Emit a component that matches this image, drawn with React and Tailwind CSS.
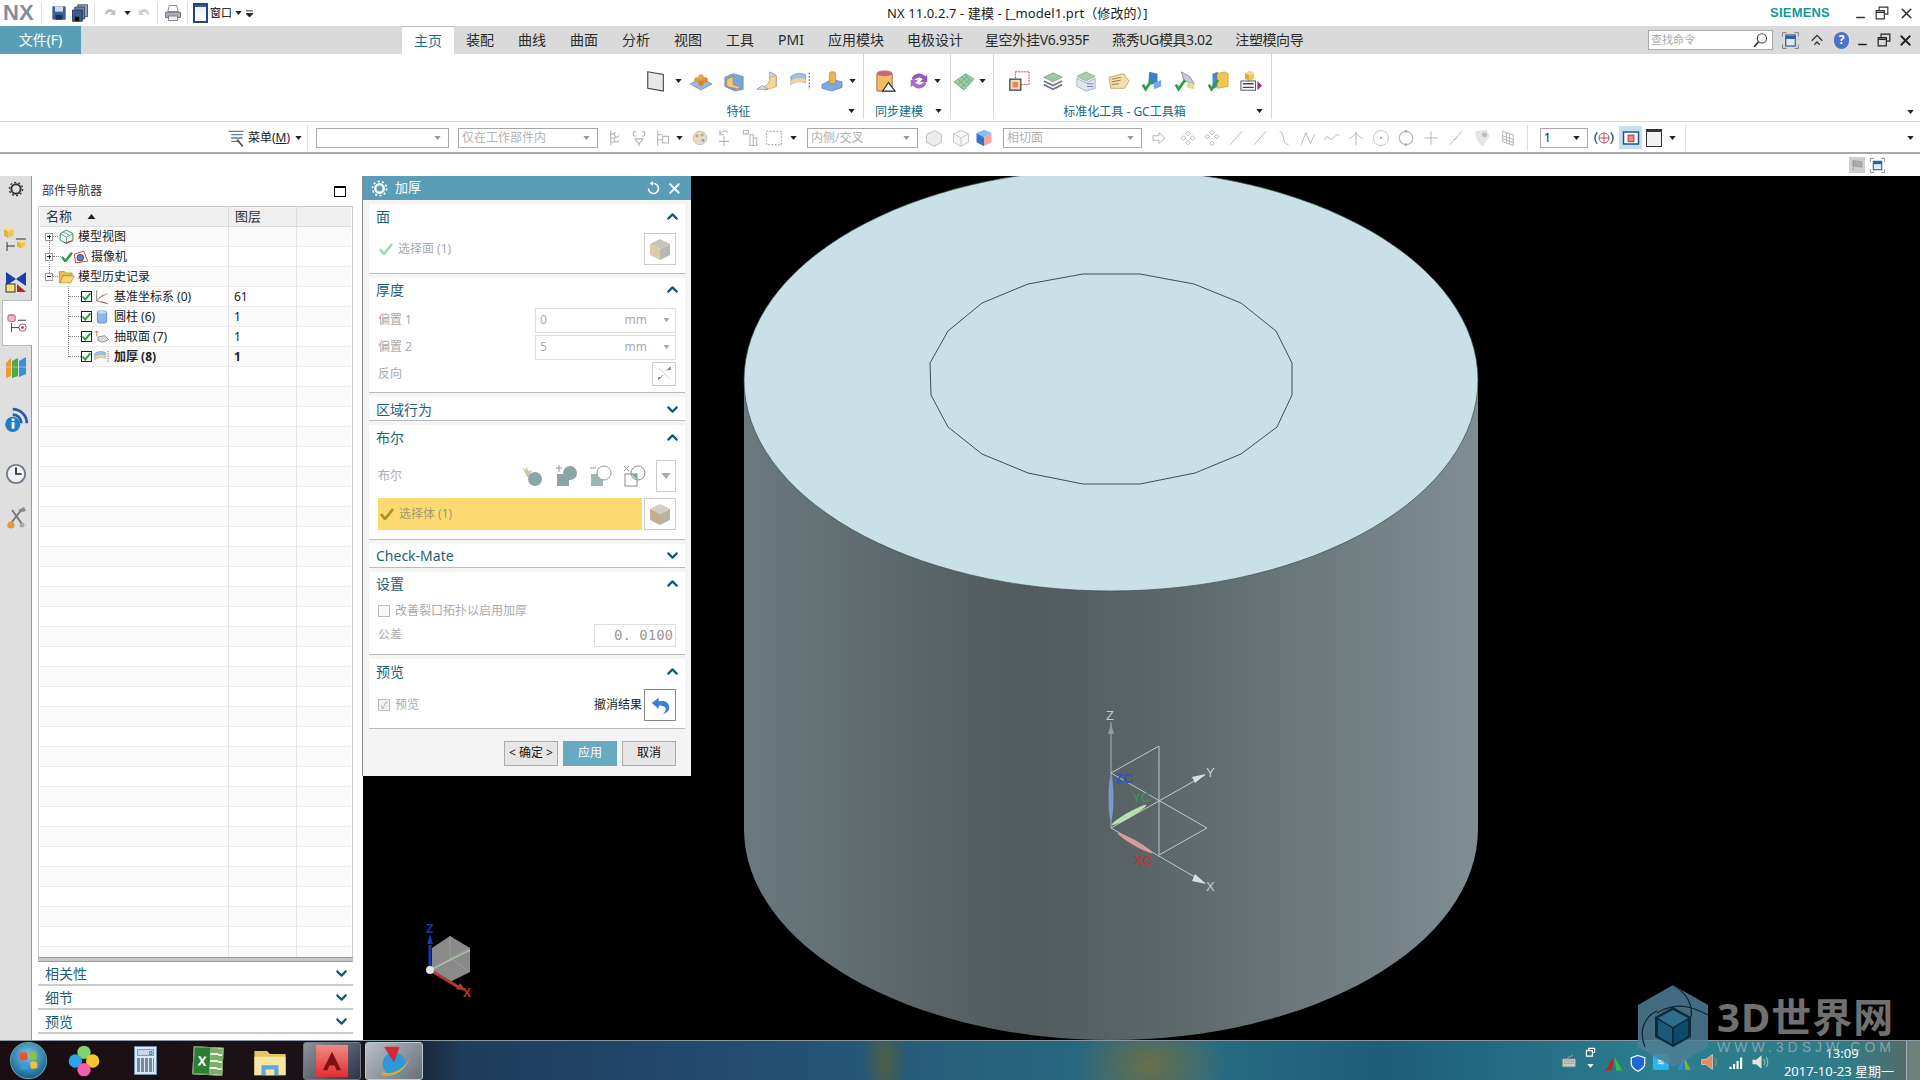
import { X, Minus, ChevronUp, ChevronDown } from 'lucide-react';

const tabs = [
  ['装配', 'px-[12px]'],
  ['曲线', 'px-[12px]'],
  ['曲面', 'px-[12px]'],
  ['分析', 'px-[12px]'],
  ['视图', 'px-[12px]'],
  ['工具', 'px-[12px]'],
  ['PMI', 'px-[12px]'],
  ['应用模块', 'px-[12px]'],
  ['电极设计', 'px-[11px]'],
  ['星空外挂V6.935F', 'px-[11px] tracking-[-0.3px]'],
  ['燕秀UG模具3.02', 'px-[12px] tracking-[-0.4px]'],
  ['注塑模向导', 'px-[11px] tracking-[-0.4px]'],
];

const S = ({ s = 22, children, className = '' }) => (
  <svg viewBox="0 0 24 24" width={s} height={s} className={`shrink-0 ${className}`}>
    {children}
  </svg>
);

const Caret = ({ color = '#222', className = '' }) => (
  <svg viewBox="0 0 8 5" width="7" height="4" className={`shrink-0 ${className}`}>
    <path d="M0 0h8L4 5z" fill={color} />
  </svg>
);

const Slot = ({ w, children }) => <div className={`flex items-center justify-center shrink-0 ${w}`}>{children}</div>;

const Chev = ({ up }) =>
  up ? <ChevronUp size={17} strokeWidth={3} className="text-[#15566c]" /> : <ChevronDown size={17} strokeWidth={3} className="text-[#15566c]" />;

// ribbon icons
const Box = ({ top = '#f2b04e', left = '#c97a1e', right = '#e89a36' }) => (
  <>
    <path d="M12 3l8 4-8 4-8-4z" fill={top} />
    <path d="M4 7l8 4v10l-8-4z" fill={left} />
    <path d="M20 7l-8 4v10l8-4z" fill={right} />
  </>
);
const icons = {
  plane: <path d="M3 2l17 3v18L3 20z" fill="#e4ebe4" stroke="#444" strokeWidth="1.2" />,
  block: (
    <>
      <path d="M1 15l11-6 11 6-11 6z" fill="#9db7e0" stroke="#5b76ad" strokeWidth=".6" />
      <circle cx="8" cy="11" r="2.8" fill="#e59a3c" /><circle cx="12" cy="8" r="2.8" fill="#e8a648" /><circle cx="16" cy="11" r="2.8" fill="#dc8e30" /><circle cx="12" cy="14" r="2.8" fill="#d98628" />
    </>
  ),
  extrude: (
    <>
      <path d="M2 8l9-4 11 3v14l-9 2-11-5z" fill="#7ea3d8" stroke="#4f6ea5" strokeWidth=".6" />
      <path d="M4 10l7-3v9l7 2v3l-14-3z" fill="#f0c77c" stroke="#a8752d" strokeWidth=".6" />
    </>
  ),
  sweep: (
    <>
      <path d="M15 2l7 4v12l-7-3z" fill="#cfd8ec" stroke="#667" strokeWidth=".6" />
      <path d="M15 8c0 7-4 10-9 11l4 3c5-2 9-2 12-4V6z" fill="#f6d49a" stroke="#b08a45" strokeWidth=".6" />
      <path d="M1 21l6-4 6 4z" fill="#dde3f2" stroke="#667" strokeWidth=".6" />
    </>
  ),
  thicken: (
    <>
      <path d="M1 7c5-4 10-4 16-2v9c-6-2-11-2-16 2z" fill="#9cc0ea" stroke="#4d74a8" strokeWidth=".6" />
      <path d="M1 12c5-4 10-4 16-2v4c-6-2-11-2-16 2z" fill="#f3d488" />
      <path d="M21 3v18" stroke="#c33" strokeWidth="1.2" strokeDasharray="2 1.5" />
    </>
  ),
  boss: (
    <>
      <path d="M1 16l11-6 11 3v6l-11 4-11-3z" fill="#7ea7e0" stroke="#3f68a8" strokeWidth=".6" />
      <rect x="9" y="2" width="7" height="13" rx="2" fill="#eeb25a" stroke="#b07a28" strokeWidth=".6" />
    </>
  ),
  cyl: (
    <>
      <path d="M3 4c0-4 16-4 16 0v18H3z" fill="#f0c060" stroke="#a04040" strokeWidth=".8" />
      <ellipse cx="11" cy="4" rx="8" ry="2.6" fill="#d0657a" />
      <path d="M15 13l7 9H9z" fill="#fff" stroke="#333" strokeWidth="1.3" />
    </>
  ),
  sync: (
    <>
      <path d="M4 10c1-6 10-9 15-3l2-2v8h-8l3-3c-3-3-7-2-9 1z" fill="#9a56b8" />
      <path d="M20 14c-1 6-10 9-15 3l-2 2v-8h8l-3 3c3 3 7 2 9-1z" fill="#a96cc6" />
    </>
  ),
  mesh: (
    <>
      <path d="M1 13l13-9 9 6-11 12z" fill="#9bcba8" stroke="#5f9470" strokeWidth=".7" />
      <path d="M5 10l9 8M9 7l9 8M13 5l6 7M5 16l11-9M9 19l10-9" stroke="#5f9470" strokeWidth=".6" fill="none" />
    </>
  ),
  frame: (
    <>
      <rect x="8" y="2" width="15" height="14" fill="#fff" stroke="#c33" strokeWidth="1" strokeDasharray="2 1" />
      <rect x="2" y="10" width="12" height="12" fill="#f5d8c8" stroke="#444" strokeWidth="1.4" />
      <rect x="5" y="13" width="6" height="6" fill="#e8884a" />
    </>
  ),
  layers: (
    <>
      <path d="M12 3l10 5-10 5L2 8z" fill="#9fc9a4" stroke="#777" strokeWidth=".6" />
      <path d="M2 12l10 5 10-5M2 16l10 5 10-5" stroke="#778" strokeWidth="2" fill="none" />
    </>
  ),
  table: (
    <>
      <path d="M12 2l10 5-10 5L2 7z" fill="#a9cdaa" stroke="#888" strokeWidth=".6" />
      <path d="M2 9l10 5 10-5v11l-10 3-10-5z" fill="#dfe5ee" stroke="#8a93a8" strokeWidth=".7" />
      <path d="M13 15h7M13 18h7" stroke="#7a88a8" strokeWidth="1.2" />
    </>
  ),
  tag: (
    <>
      <path d="M1 8l16-4 6 8-5 8-15 0z" fill="#f2e0a8" stroke="#a08a50" strokeWidth=".7" />
      <path d="M4 10l10-2M4 13l10-2M4 16l8-1" stroke="#6a5a30" strokeWidth=".8" />
    </>
  ),
  chk1: (
    <>
      <path d="M9 2l9 2v10l-7 2-3-2z" fill="#3a7fd0" />
      <path d="M14 14l8-3v7l-8 3z" fill="#77a8e8" />
      <path d="M2 16l3 5 7-10" stroke="#2aa040" strokeWidth="3" fill="none" />
    </>
  ),
  chk2: (
    <>
      <path d="M8 2l9 5 5 8-11-3z" fill="#c6ccda" stroke="#557" strokeWidth=".6" />
      <path d="M15 13l7 2v6l-8-2z" fill="#e3d79a" />
      <path d="M2 16l3 5 7-10" stroke="#2aa040" strokeWidth="3" fill="none" />
    </>
  ),
  chk3: (
    <>
      <path d="M6 4l6-2v16l-6 3z" fill="#4a87d8" />
      <path d="M11 4l8-2 4 2v14l-12 2z" fill="#f4c650" stroke="#b08a20" strokeWidth=".6" />
      <path d="M2 16l3 5 7-10" stroke="#2aa040" strokeWidth="3" fill="none" />
    </>
  ),
  abc: (
    <>
      <g transform="translate(3 -1) scale(.62)"><Box top="#f7d77e" left="#d9a93c" right="#eec35c" /></g>
      <rect x="1" y="12" width="16" height="10" fill="#fff" stroke="#446" strokeWidth="1" />
      <path d="M3 15h12M3 19h12" stroke="#446" strokeWidth="1.4" />
      <path d="M19 12l5 5-5 5z" fill="#a0308a" />
    </>
  ),
};
const I = ({ n, s = 22 }) => <S s={s}>{icons[n]}</S>;

// gray disabled toolbar icons
const G = ({ d, fill = 'none', s = 20 }) => (
  <S s={s}>
    <path d={d} fill={fill} stroke="#b4b4b4" strokeWidth="1.3" />
  </S>
);
const grayA = [
  ['w-[26px]', 'M8 3v18M8 7h5M8 12h5M8 17h5M14 5a3 3 0 1 0 4 4M14 11a3 3 0 1 0 4 4'],
  ['w-[24px]', 'M8 4a3 3 0 1 0 0 6M16 4a3 3 0 1 1 0 6M7 13h10l-5 6zM12 19v3'],
  ['w-[20px]', 'M8 3v18M8 8h6M8 14h6M14 10h7v8h-7z'],
];

const Combo = ({ w, text, ml, dark }) => (
  <div className={`flex items-center justify-between h-[20px] border border-[#a8a8a8] bg-white pl-[3px] pr-[7px] shrink-0 ${w} ${ml}`}>
    <span className={`text-[12px] leading-none ${dark ? 'text-[#222]' : 'text-[#b0b0b0]'}`}>{text}</span>
    <Caret color={dark ? '#222' : '#999'} />
  </div>
);

const TitleBar = () => (
  <div className="h-[26px] flex items-center bg-white shrink-0">
    <span className="w-[36px] pl-[3px] text-[22px] font-bold leading-none text-[#7f8e9e] font-['Liberation_Sans',sans-serif]">NX</span>
    <div className="w-px h-[22px] bg-[#ddd] ml-[5px]" />
    <S s={16} className="ml-[9px]">
      <path d="M2 2h20v20H2z" fill="#3a5e96" /><path d="M6 2h12v8H6z" fill="#cfd8e8" /><path d="M7 15h10v7H7z" fill="#1d2f50" />
    </S>
    <S s={18} className="ml-[4px]">
      <path d="M9 1h13v16H9z" fill="#8ea4c4" stroke="#334" /><path d="M5 4h13v16H5z" fill="#6a86b0" stroke="#334" /><path d="M2 8h13v15H2z" fill="#3a5e96" stroke="#223" /><path d="M5 17h6v6H5z" fill="#111" />
    </S>
    <div className="w-px h-[22px] bg-[#ddd] ml-[5px]" />
    <S s={16} className="ml-[7px]"><path d="M4 13c2-8 10-9 14-4l2-3v9h-8l3-3c-3-3-6-2-8 3z" fill="#b9c3d0" /></S>
    <Caret className="ml-[6px]" />
    <S s={16} className="ml-[5px]"><path d="M20 13c-2-8-10-9-14-4L4 6v9h8L9 12c3-3 6-2 8 3z" fill="#c9d2dc" /></S>
    <div className="w-px h-[22px] bg-[#ddd] ml-[5px]" />
    <S s={18} className="ml-[6px]">
      <path d="M7 2h10l2 8H5z" fill="#fff" stroke="#667" /><path d="M2 11h20v7H2z" fill="#a8b0bc" stroke="#556" /><path d="M6 16h12v6H6z" fill="#eee" stroke="#667" />
    </S>
    <div className="w-px h-[22px] bg-[#ddd] ml-[5px]" />
    <div className="w-[15px] h-[20px] ml-[5px] border-2 border-[#22457e] bg-[linear-gradient(180deg,#2c5ea0_0,#2c5ea0_15%,#eef3fa_15%,#fff_100%)]" />
    <span className="ml-[2px] text-[11px] text-black">窗口</span>
    <Caret className="ml-[3px]" />
    <svg viewBox="0 0 8 8" width="7" height="7" className="ml-[4px]"><path d="M0 1h8M0 4h8L4 8z" stroke="#222" fill="#222" /></svg>
    <span className="absolute left-[887px] top-[5px] text-[13px] leading-[17px] tracking-[0.1px] text-[#1c1c1c] whitespace-pre">NX 11.0.2.7 - 建模 - [_model1.prt（修改的）]</span>
    <span className="ml-auto text-[13px] font-bold tracking-[0.2px] text-[#0f9a9c] font-['Liberation_Sans',sans-serif]">SIEMENS</span>
    <Minus size={13} strokeWidth={2.5} className="ml-[24px] mt-[8px] text-[#333]" />
    <S s={14} className="ml-[8px]"><path d="M7 8V2h15v12h-6M2 8h14v14H2zM2 11h14" fill="none" stroke="#333" strokeWidth="2" /></S>
    <X size={17} strokeWidth={2.3} className="ml-[9px] mr-[5px] text-[#333]" />
  </div>
);

const MenuBar = () => (
  <div className="h-[28px] flex items-stretch bg-[#dadada] shrink-0">
    <div className="w-[81px] bg-[#5a9eb6] text-white text-[14px] flex items-center justify-center pb-[2px]">文件(F)</div>
    <div className="w-[321px]" />
    <div className="w-[52px] bg-white text-[#14708a] text-[14px] flex items-center justify-center border-t border-[#bbb] pb-[1px]">主页</div>
    {tabs.map(([t, p]) => (
      <div key={t} className={`text-[14px] text-[#2a2a2a] flex items-center whitespace-nowrap pb-[1px] ${p}`}>{t}</div>
    ))}
    <div className="ml-auto flex items-center">
      <div className="w-[125px] h-[20px] bg-white border border-[#aaa] flex items-center justify-between pl-[2px] pr-[3px]">
        <span className="text-[11px] text-[#aaa]">查找命令</span>
        <S s={17}><circle cx="14" cy="9" r="6.5" fill="#f4f6f8" stroke="#444" strokeWidth="1.6" /><path d="M9 14l-6 7" stroke="#444" strokeWidth="2.6" /></S>
      </div>
      <S s={19} className="ml-[8px]"><path d="M2 7V2h5M17 2h5v5M22 17v5h-5M7 22H2v-5" fill="none" stroke="#667" /><rect x="6" y="5" width="12" height="14" fill="#dfe8f4" stroke="#2c4f85" strokeWidth="1.4" /><path d="M6 6h12v4H6z" fill="#2c5ea0" /></S>
      <S s={16} className="ml-[9px]"><path d="M4 13l8-8 8 8M8 19l4-4 4 4" fill="none" stroke="#333" strokeWidth="2" /></S>
      <div className="ml-[9px] w-[15px] h-[17px] rounded-full bg-[#4a74c8] text-white text-[12px] font-bold flex items-center justify-center">?</div>
      <Minus size={13} strokeWidth={2.5} className="ml-[7px] mt-[8px] text-[#222]" />
      <S s={14} className="ml-[8px]"><path d="M7 8V2h15v12h-6M2 8h14v14H2zM2 11h14" fill="none" stroke="#222" strokeWidth="2" /></S>
      <X size={17} strokeWidth={2.6} className="ml-[6px] mr-[6px] text-[#222]" />
    </div>
  </div>
);

const Group = ({ w, label, caret, pr = '', children }) => (
  <div className={`flex flex-col shrink-0 border-r border-[#d8d8d8] mb-[2px] ${w}`}>
    <div className="h-[49px] flex items-center pt-[5px]">{children}</div>
    <div className={`flex-1 relative flex items-center justify-center pt-[2px] ${pr}`}>
      <span className="text-[12px] leading-none text-[#166a80]">{label}</span>
      {caret && <Caret className="absolute right-[8px] top-[6px]" />}
    </div>
  </div>
);

const Ribbon = () => (
  <div className="h-[68px] flex bg-white border-b border-[#d8d8d8] shrink-0">
    <div className="w-[640px] shrink-0" />
    <Group w="w-[224px]" label="特征" caret pr="pr-[26px]">
      <Slot w="w-[32px]"><I n="plane" /></Slot>
      <Slot w="w-[12px]"><Caret /></Slot>
      <Slot w="w-[34px]"><I n="block" s={24} /></Slot>
      <Slot w="w-[32px]"><I n="extrude" /></Slot>
      <Slot w="w-[34px]"><I n="sweep" /></Slot>
      <Slot w="w-[34px]"><I n="thicken" /></Slot>
      <Slot w="w-[28px]"><I n="boss" /></Slot>
      <Slot w="w-[12px]"><Caret /></Slot>
    </Group>
    <Group w="w-[87px]" label="同步建模" caret pr="pr-[16px]">
      <Slot w="w-[42px]"><I n="cyl" s={23} /></Slot>
      <Slot w="w-[26px]"><I n="sync" /></Slot>
      <Slot w="w-[10px]"><Caret /></Slot>
    </Group>
    <Group w="w-[43px]" label="">
      <Slot w="w-[26px]"><I n="mesh" /></Slot>
      <Slot w="w-[10px]"><Caret /></Slot>
    </Group>
    <Group w="w-[278px]" label="标准化工具 - GC工具箱" caret pr="pr-[16px]">
      <Slot w="w-[38px]" />
      <div className="-ml-[30px] flex">
        {[['frame', 'w-[34px]'], ['layers', 'w-[33px]'], ['table', 'w-[33px]'], ['tag', 'w-[33px]'], ['chk1', 'w-[33px]'], ['chk2', 'w-[33px]'], ['chk3', 'w-[33px]'], ['abc', 'w-[33px]']].map(([n, w]) => (
          <Slot key={n} w={w}><I n={n} /></Slot>
        ))}
      </div>
    </Group>
    <div className="flex-1 flex items-end justify-end pr-[6px] pb-[7px]"><Caret /></div>
  </div>
);

const Toolbar = () => (
  <div className="h-[32px] flex items-center bg-white border-b-2 border-[#a8a8a8] shrink-0 relative pt-[1px]">
    <S s={20} className="ml-[227px]"><path d="M2 4h18M5 8h14M5 12h14M5 16h10" stroke="#5f7ca8" strokeWidth="1.6" /><path d="M12 14l7 8" stroke="#555" strokeWidth="2" /></S>
    <span className="ml-[1px] text-[12px] text-[#222]">菜单(<u>M</u>)</span>
    <Caret className="ml-[5px]" />
    <div className="w-px h-[26px] bg-[#ddd] ml-[5px]" />
    <Combo w="w-[133px]" ml="ml-[8px]" text="" />
    <Combo w="w-[140px]" ml="ml-[9px]" text="仅在工作部件内" />
    <div className="ml-[3px] flex items-center">
      {grayA.map(([w, d]) => <Slot key={d} w={w}><G d={d} /></Slot>)}
    </div>
    <Caret className="ml-[5px]" />
    <S s={18} className="ml-[8px]"><circle cx="12" cy="12" r="9" fill="#e6dcc6" stroke="#b4b4b4" /><circle cx="8" cy="9" r="2" fill="#d89a7a" /><circle cx="15" cy="8" r="2" fill="#9ab88a" /><circle cx="16" cy="15" r="2" fill="#8aa0c8" /></S>
    <Slot w="w-[30px]"><G d="M12 10v12M6 16h12M7 8a6 5 0 0 1 10-3M7 3v5h5" /></Slot>
    <Slot w="w-[22px]"><G d="M4 3h6v4H4zM12 8h4v13h-4zM16 12h4v9h-4z" /></Slot>
    <Slot w="w-[26px]"><S s={20}><rect x="3" y="4" width="18" height="16" fill="none" stroke="#aaa" strokeWidth="1.4" strokeDasharray="2 2" /></S></Slot>
    <Caret className="ml-[3px]" />
    <Combo w="w-[111px]" ml="ml-[10px]" text="内侧/交叉" />
    <Slot w="w-[32px]"><S s={20}><path d="M3 8l10-5 8 5v9l-9 5-9-5z" fill="#ececec" stroke="#b4b4b4" /></S></Slot>
    <Slot w="w-[22px]"><S s={20}><path d="M3 7l9-4 9 4v10l-9 5-9-5zM3 7l9 5 9-5M12 12v10" fill="#f7f7f7" stroke="#bbb" /></S></Slot>
    <Slot w="w-[24px]"><S s={20}><path d="M12 2l9 4-9 5-9-5z" fill="#7fc0f0" /><path d="M3 6l9 5v11l-9-5z" fill="#3a70c8" /><path d="M21 6l-9 5v11l9-5z" fill="#f0a8a0" /></S></Slot>
    <Combo w="w-[139px]" ml="ml-[7px]" text="相切面" />
    {[
      'M4 9h8V5l8 7-8 7v-4H4z',
      'M12 3l3 3-3 3-3-3zM12 15l3 3-3 3-3-3zM3 12l3-3 3 3-3 3zM15 12l3-3 3 3-3 3z',
      'M12 2l3 3-3 3-3-3zM12 16l3 3-3 3-3-3zM3 10l3-3 3 3-3 3zM15 10l3-3 3 3-3 3z',
      'M4 21L20 3',
      'M4 21L20 3M10 14l4-4',
      'M6 3c8 2 2 16 12 18',
      'M3 21L9 5l6 14 6-12',
      'M2 14c4-10 8 4 12-2s6-4 8-4',
      'M12 4v18M3 13c4-2 6-4 9-8 3 4 5 6 9 8',
    ].map((d, i) => (
      <Slot key={d} w={i === 0 ? 'w-[34px]' : 'w-[24px]'}><G d={d} s={18} /></Slot>
    ))}
    <Slot w="w-[26px]"><S s={20}><circle cx="12" cy="12" r="9" fill="none" stroke="#bbb" /><circle cx="12" cy="12" r="1.4" fill="#aaa" /></S></Slot>
    <Slot w="w-[24px]"><S s={20}><circle cx="12" cy="12" r="8" fill="none" stroke="#bbb" strokeWidth="1.5" /><circle cx="12" cy="4" r="1.6" fill="#aaa" /><circle cx="12" cy="20" r="1.6" fill="#aaa" /></S></Slot>
    <Slot w="w-[26px]"><G d="M12 3v18M3 12h18" s={18} /></Slot>
    <Slot w="w-[24px]"><G d="M4 21L20 3M10 15l3-3" s={18} /></Slot>
    <Slot w="w-[28px]"><S s={20}><path d="M4 4l14-2 3 8-8 12c-4-2-9-8-9-18z" fill="#e4e4e4" /><circle cx="15" cy="8" r="3" fill="#bbb" /></S></Slot>
    <Slot w="w-[24px]"><G d="M5 3l14 5v14L5 17zM10 5v14M14 6v14M5 9l14 5M5 13l14 5" s={18} /></Slot>
    <div className="w-px h-[26px] bg-[#ddd] ml-[7px]" />
    <Combo w="w-[48px]" ml="ml-[12px]" text="1" dark />
    <S s={20} className="ml-[6px]"><circle cx="12" cy="12" r="6" fill="#fff" stroke="#a33" /><path d="M12 6v12M6 12h12" stroke="#a33" /><path d="M4 5A10 10 0 0 0 4 19M20 5a10 10 0 0 1 0 14" fill="none" stroke="#3a5ea8" strokeWidth="1.8" /></S>
    <div className="ml-[5px] w-[23px] h-[23px] bg-[#c3e1ee] flex items-center justify-center">
      <S s={18}><rect x="2" y="4" width="20" height="16" fill="#fff" stroke="#2c4f85" strokeWidth="2" /><path d="M8 8h8v9H8z" fill="#e88" stroke="#822" /></S>
    </div>
    <div className="ml-[4px] w-[16px] h-[18px] bg-[#f1f1f1] border border-[#333] border-t-[3px]" />
    <Caret className="ml-[7px]" />
    <div className="w-px h-[26px] bg-[#ddd] ml-[9px]" />
    <Caret className="ml-auto mr-[6px]" />
  </div>
);

const SubBar = () => (
  <div className="h-[22px] flex items-center justify-end bg-white shrink-0 pr-[34px] gap-[4px]">
    <div className="w-[16px] h-[16px] bg-[#cfcfcf] flex items-center justify-center">
      <S s={13}><path d="M4 3l16 2v10L4 13zM4 3v19" fill="#aaa" stroke="#888" /></S>
    </div>
    <S s={17}><path d="M2 7V2h5M17 2h5v5M22 17v5h-5M7 22H2v-5" fill="none" stroke="#667" /><rect x="6" y="6" width="12" height="12" fill="#dfe8f4" stroke="#2c4f85" strokeWidth="1.4" /><path d="M6 6h12v4H6z" fill="#2c5ea0" /></S>
  </div>
);

const SideTabs = () => (
  <div className="w-[32px] shrink-0 bg-[#dfdfdf] border-r border-[#9a9a9a] flex flex-col items-center">
    <S s={16} className="mt-[5px]"><circle cx="12" cy="12" r="7" fill="none" stroke="#333" strokeWidth="3" /><circle cx="12" cy="12" r="10" fill="none" stroke="#333" strokeWidth="2" strokeDasharray="3 3.3" /></S>
    <S s={24} className="mt-[31px]">
      <g transform="translate(-3 -3) scale(.62)"><Box top="#f7dc80" left="#dfb23c" right="#f0c850" /></g>
      <g transform="translate(11 10) scale(.5)"><Box top="#f7dc80" left="#dfb23c" right="#f0c850" /></g>
      <path d="M3 14v9M3 18h8M12 11h10" stroke="#333" fill="none" />
    </S>
    <S s={24} className="mt-[18px]"><path d="M2 2l10 7 10-7v14l-10-7L2 16z" fill="#1b3ea8" /><rect x="2" y="14" width="9" height="8" fill="#f4e27a" stroke="#333" /><path d="M13 14l9 8h-9z" fill="#c4221e" /></S>
    <div className="mt-[6px] -mr-px ml-[2px] w-[31px] h-[46px] bg-white border-y border-l border-[#b8b8b8] flex items-center justify-center">
      <svg viewBox="0 0 24 24" width="22" height="24"><ellipse cx="5" cy="4" rx="4" ry="1.6" fill="#d65a8a" /><path d="M1 4v5c0 2 8 2 8 0V4" fill="#e9b8cc" stroke="#a04070" strokeWidth=".8" /><path d="M5 12v10M5 17h8M12 9h9" stroke="#333" fill="none" /><circle cx="17" cy="17" r="4" fill="none" stroke="#a04070" /><circle cx="17" cy="17" r="1.5" fill="#a04070" /></svg>
    </div>
    <S s={24} className="mt-[9px]"><path d="M2 8l5-5v18l-5 2z" fill="#ee9a2a" /><path d="M8 6l6-3v18l-6 2z" fill="#4ea84a" /><path d="M15 6l7-4v17l-7 3z" fill="#3a90d8" /><path d="M2 12h20" stroke="#fff" strokeWidth=".8" opacity=".5" /></S>
    <S s={26} className="mt-[28px]"><circle cx="9" cy="16" r="7" fill="#1f7ec8" /><rect x="8" y="14" width="2.6" height="6" fill="#fff" /><rect x="8" y="10.6" width="2.6" height="2.2" fill="#fff" /><path d="M9 7a8 8 0 0 1 8 8M9 2a13 13 0 0 1 13 13" fill="none" stroke="#2a5aa8" strokeWidth="2.4" /></S>
    <S s={22} className="mt-[30px]"><circle cx="12" cy="12" r="10" fill="#f1f3f6" stroke="#6f7a88" strokeWidth="2" /><path d="M12 5v7h6" fill="none" stroke="#222" strokeWidth="1.8" /></S>
    <S s={24} className="mt-[20px]"><path d="M4 22L18 4" stroke="#777" strokeWidth="2" /><path d="M14 5l6-3 2 4-4 1z" fill="#888" /><path d="M8 5l10 14" stroke="#777" strokeWidth="2" /><circle cx="7" cy="20" r="3.5" fill="#e09a3a" /><circle cx="18" cy="20" r="2.5" fill="#aaa" /></S>
  </div>
);

const Check = ({ color = '#22a23c', className = '' }) => (
  <svg viewBox="0 0 14 12" width="14" height="12" className={`shrink-0 ${className}`}>
    <path d="M1 6l4 5 8-10" fill="none" stroke={color} strokeWidth="2.8" />
  </svg>
);
const CheckBox = () => (
  <div className="w-[11px] h-[11px] border border-[#222] bg-white flex items-center justify-center shrink-0">
    <svg viewBox="0 0 14 12" width="11" height="9"><path d="M1 6l4 5 8-10" fill="none" stroke="#22a23c" strokeWidth="3" /></svg>
  </div>
);
const PlusBox = ({ minus }) => (
  <div className="w-[8px] h-[8px] border border-[#999] bg-white relative shrink-0 flex items-center justify-center">
    <div className="w-[4px] h-px bg-[#222]" />
    {!minus && <div className="absolute w-px h-[4px] bg-[#222]" />}
  </div>
);
const Stub = () => <div className="w-[12px] border-t border-dotted border-[#888] shrink-0" />;

const rowsData = [
  { cells: <div className="flex items-center pl-[5px]"><PlusBox /><div className="w-[5px] border-t border-dotted border-[#888]" /><S s={17} className="mr-[3px]"><path d="M12 3l9 5v9l-9 5-9-5V8z" fill="none" stroke="#1c9a6a" strokeWidth="1.4" /><path d="M3 8l9 5 9-5M12 13v9M7 5.5l9 5" stroke="#1c9a6a" fill="none" /><path d="M11 21l10-3" stroke="#d33" strokeWidth="1.6" /></S><span>模型视图</span></div> },
  { cells: <div className="flex items-center pl-[5px]"><PlusBox /><div className="w-[8px] border-t border-dotted border-[#888]" /><svg viewBox="0 0 14 12" width="12" height="10"><path d="M1 6l4 5 8-10" fill="none" stroke="#22a23c" strokeWidth="3" /></svg><S s={16} className="mr-[2px]"><path d="M2 8l14-5 6 15-18 3z" fill="#fff" stroke="#c33" strokeWidth="1.4" /><circle cx="11" cy="13" r="5" fill="#6a7fbf" stroke="#223" /></S><span>摄像机</span></div> },
  { cells: <div className="flex items-center pl-[5px]"><PlusBox minus /><div className="w-[5px] border-t border-dotted border-[#888]" /><S s={17} className="mr-[3px]"><path d="M2 5h7l2 2h9v4H7L3 21H2z" fill="#eebd48" stroke="#9b7a20" strokeWidth=".8" /><path d="M7 11h16l-5 10H3z" fill="#f7d679" stroke="#9b7a20" strokeWidth=".8" /></S><span>模型历史记录</span></div> },
  { layer: '61', cells: <div className="flex items-center pl-[29px]"><Stub /><CheckBox /><S s={16} className="ml-[2px] mr-[4px]"><path d="M4 2v16l16 4M4 18l10-10" stroke="#555" fill="none" /><path d="M8 13l12-6M10 18l10 4" stroke="#c33" /></S><span>基准坐标系 (0)</span></div> },
  { layer: '1', cells: <div className="flex items-center pl-[29px]"><Stub /><CheckBox /><S s={16} className="ml-[2px] mr-[4px]"><rect x="5" y="3" width="14" height="18" rx="3" fill="#8fb6ea" stroke="#4a74b8" /><ellipse cx="12" cy="5" rx="6" ry="2" fill="#c9dcf6" /></S><span>圆柱 (6)</span></div> },
  { layer: '1', cells: <div className="flex items-center pl-[29px]"><Stub /><CheckBox /><S s={16} className="ml-[2px] mr-[4px]"><path d="M6 12l10-2 6 6-10 4-6-3z" fill="#dcdcdc" stroke="#666" /><path d="M4 3v8M1 6l3-3 3 3" stroke="#d5402a" fill="none" /></S><span>抽取面 (7)</span></div> },
  { layer: '1', bold: true, cells: <div className="flex items-center pl-[29px] font-bold"><Stub /><CheckBox /><S s={16} className="ml-[2px] mr-[4px]">{icons.thicken}</S><span>加厚 (8)</span></div> },
];

const Navigator = () => (
  <div className="w-[331px] shrink-0 bg-white flex flex-col">
    <div className="h-[30px] flex items-center justify-between pl-[10px] pr-[17px] shrink-0">
      <span className="text-[12px] text-[#333]">部件导航器</span>
      <div className="w-[12px] h-[11px] border border-black border-t-2" />
    </div>
    <div className="ml-[6px] mr-[10px] flex-1 border-x border-t border-[#ccc] overflow-hidden px-px pt-0 min-h-0 relative">
      <div className="grid grid-cols-[189px_68px_1fr] h-[20px] bg-[#f0f0f0] border-b border-[#ddd] text-[13px] text-[#333]">
        <div className="flex items-center pl-[6px] border-r border-[#ddd]">名称<svg viewBox="0 0 8 5" width="9" height="5" className="ml-[15px]"><path d="M0 5h8L4 0z" fill="#222" /></svg></div>
        <div className="flex items-center pl-[6px] border-r border-[#ddd]">图层</div>
        <div />
      </div>
      <div className="absolute left-[10px] top-[34px] h-[36px] border-l border-dotted border-[#888]" />
      <div className="absolute left-[29px] top-[79px] h-[71px] border-l border-dotted border-[#888]" />
      {Array.from({ length: 37 }, (_, i) => rowsData[i] || {}).map((r, i) => (
        <div key={i} className={`grid grid-cols-[189px_68px_1fr] h-[20px] border-b border-[#ececec] text-[12px] text-[#222] ${i % 2 ? 'bg-white' : 'bg-[#fafafa]'}`}>
          <div className="border-r border-[#e4e4e4] flex items-center">{r.cells}</div>
          <div className={`border-r border-[#e4e4e4] flex items-center pl-[5px] ${r.bold ? 'font-bold' : ''}`}>{r.layer}</div>
          <div />
        </div>
      ))}
    </div>
    <div className="ml-[6px] mr-[10px] h-[5px] bg-[#c8c8c8] border-y border-[#999] shrink-0" />
    {['相关性', '细节', '预览'].map((t) => (
      <div key={t} className="ml-[6px] mr-[10px] h-[24px] border-b-2 border-[#ccc] flex items-center justify-between pl-[7px] pr-[3px] shrink-0 text-[14px] text-[#1f5f75]">
        {t}
        <Chev />
      </div>
    ))}
    <div className="h-[6px] shrink-0" />
  </div>
);

const FaceBtn = ({ dim }) => (
  <div className="w-[32px] h-[32px] bg-white border border-[#ccc] flex items-center justify-center shrink-0">
    <S s={24}>
      <path d="M12 2l10 5-10 5L2 7z" fill={dim ? '#d2cec6' : '#c7c4bb'} />
      <path d="M2 7l10 5v11L2 18z" fill={dim ? '#c4ad8c' : '#dcccac'} />
      <path d="M22 7l-10 5v11l10-5z" fill={dim ? '#b9b3a6' : '#b8b8b4'} />
    </S>
  </div>
);

const Sec = ({ title, h, up = true, children }) => (
  <div className={`bg-white border-b border-[#bbb] mx-[6px] ${h}`}>
    <div className="h-[24px] flex items-center justify-between pl-[7px] pr-[4px] text-[14px] text-[#1f5f75]">
      <span>{title}</span>
      <Chev up={up} />
    </div>
    {children}
  </div>
);

const NumRow = ({ label, val }) => (
  <div className="flex items-center justify-between h-[25px] pl-[9px] pr-[9px] mb-[2px] text-[12px] text-[#aaa]">
    <span>{label}</span>
    <div className="w-[141px] h-[25px] border border-[#ddd] flex items-center justify-between pl-[4px] pr-[5px]">
      <span>{val}</span>
      <span className="flex items-center"><span className="mr-[16px]">mm</span><Caret color="#aaa" /></span>
    </div>
  </div>
);

const Dialog = () => (
  <div className="absolute left-[-1px] top-0 w-[329px] h-[600px] bg-[#f4f4f4] border-l border-[#888] flex flex-col gap-[4px] pb-[10px]">
    <div className="h-[24px] bg-[#5a9db6] flex items-center pl-[8px] pr-[8px] text-white shrink-0">
      <S s={17}><circle cx="12" cy="12" r="6" fill="none" stroke="#fff" strokeWidth="3.4" /><circle cx="12" cy="12" r="10" fill="none" stroke="#fff" strokeWidth="2.4" strokeDasharray="3 3.3" /></S>
      <span className="ml-[7px] text-[13px]">加厚</span>
      <S s={15} className="ml-auto"><path d="M12 4a8 8 0 1 1-8 8" fill="none" stroke="#fff" strokeWidth="2.6" /><path d="M11 0v8l-5-4z" fill="#fff" /></S>
      <X size={17} strokeWidth={2.8} className="ml-[5px]" />
    </div>
    <Sec title="面" h="h-[70px]">
      <div className="flex items-center justify-between pl-[10px] pr-[9px] h-[38px] pt-[4px] text-[12px] text-[#aaa]">
        <span className="flex items-center"><Check className="mr-[5px] opacity-40" />选择面 (1)</span>
        <FaceBtn />
      </div>
    </Sec>
    <Sec title="厚度" h="h-[116px]">
      <div className="pt-[6px]">
        <NumRow label="偏置 1" val="0" />
        <NumRow label="偏置 2" val="5" />
        <div className="flex items-center justify-between pl-[9px] pr-[9px] h-[24px] text-[12px] text-[#aaa]">
          <span>反向</span>
          <div className="w-[24px] h-[24px] border border-[#ccc] flex items-center justify-center">
            <S s={17}><path d="M4 4l16 16" stroke="#bbb" /><path d="M20 3l-6 6" stroke="#999" strokeWidth="1.4" /><path d="M21 2v5h-5z" fill="#888" /><path d="M4 20l6-6" stroke="#999" strokeWidth="1.4" /><path d="M3 22v-5h5z" fill="#888" /></S>
          </div>
        </div>
      </div>
    </Sec>
    <Sec title="区域行为" h="h-[24px]" up={false} />
    <Sec title="布尔" h="h-[115px]">
      <div className="flex items-center pl-[9px] pr-[9px] h-[32px] mt-[11px] text-[12px] text-[#aaa]">
        <span>布尔</span>
        <div className="ml-auto flex items-center gap-[10px] mr-[10px]">
          <S s={24}><path d="M2 3l3 3 2-3 1 4 4-1-2 4 2 2-5 1z" fill="#c4ccb0" /><circle cx="15" cy="15" r="7" fill="#8ea5a8" /></S>
          <S s={24}><path d="M5 1v7M2 4h6" stroke="#999" /><rect x="3" y="10" width="12" height="12" fill="#8ea5a8" /><circle cx="16" cy="9" r="7" fill="#8ea5a8" /></S>
          <S s={24}><path d="M2 4h6" stroke="#999" /><rect x="3" y="10" width="12" height="12" fill="#a0b3b5" /><circle cx="16" cy="9" r="7" fill="#fff" stroke="#999" /></S>
          <S s={24}><path d="M2 2l5 5M7 2L2 7" stroke="#999" /><rect x="3" y="10" width="12" height="12" fill="#fff" stroke="#888" /><circle cx="16" cy="9" r="7" fill="none" stroke="#888" /><path d="M9 10h6v6" fill="#8ea5a8" /></S>
        </div>
        <div className="w-[20px] h-[32px] border border-[#ccc] flex items-center justify-center"><svg viewBox="0 0 8 5" width="10" height="6"><path d="M0 0h8L4 5z" fill="#aaa" /></svg></div>
      </div>
      <div className="flex items-center justify-between pl-[9px] pr-[9px] mt-[6px] gap-[2px] text-[12px]">
        <div className="flex-1 h-[32px] bg-[#fdd971] flex items-center pl-[2px] text-[#a39a70]">
          <Check color="#a5961e" className="mr-[5px]" />选择体 (1)
        </div>
        <FaceBtn dim />
      </div>
    </Sec>
    <Sec title="Check-Mate" h="h-[24px]" up={false} />
    <Sec title="设置" h="h-[84px]">
      <div className="flex items-center pl-[9px] h-[22px] mt-[4px] text-[12px] text-[#aaa]">
        <div className="w-[12px] h-[12px] border border-[#bbb] bg-[#f8f8f8] mr-[5px]" />改善裂口拓扑以启用加厚
      </div>
      <div className="flex items-center justify-between pl-[9px] pr-[9px] mt-[2px] text-[12px] text-[#aaa]">
        <span>公差</span>
        <div className="w-[82px] h-[23px] border border-[#ddd] flex items-center justify-end pr-[2px] overflow-hidden whitespace-pre text-[14px] text-[#999] font-['DejaVu_Sans_Mono',monospace]">0. 0100</div>
      </div>
    </Sec>
    <Sec title="预览" h="h-[70px]">
      <div className="flex items-center pl-[9px] pr-[9px] h-[32px] mt-[6px] text-[12px] text-[#aaa]">
        <div className="w-[12px] h-[12px] border border-[#bbb] bg-[#f4f4f4] mr-[5px] flex items-center justify-center text-[10px] leading-none text-[#999]">✓</div>
        预览
        <span className="ml-auto mr-[2px] text-[#222]">撤消结果</span>
        <div className="w-[32px] h-[32px] bg-white border border-[#888] flex items-center justify-center">
          <S s={21}><path d="M2 9l8-6v4c6-1 12 1 12 7 0 4-3 7-8 8 3-2 4-4 4-6 0-3-4-4-8-4v4z" fill="#3d7fd6" /></S>
        </div>
      </div>
    </Sec>
    <div className="flex justify-end gap-[5px] pr-[15px] mt-[8px] text-[12px]">
      <div className="w-[54px] h-[25px] bg-[#e6e6e6] border border-[#aaa] flex items-center justify-center text-[#111]">&lt; 确定 &gt;</div>
      <div className="w-[54px] h-[25px] bg-[#68aabf] text-white flex items-center justify-center">应用</div>
      <div className="w-[54px] h-[25px] bg-[#e6e6e6] border border-[#aaa] flex items-center justify-center text-[#111]">取消</div>
    </div>
  </div>
);

const poly = '1083,274 1140,274 1194,284 1241,303 1276,331 1292,363 1292,395 1277,427 1241,454 1195,473 1140,484 1083,484 1028,473 982,454 948,427 931,395 930,363 948,331 982,303 1028,284';

const ModelView = () => (
  <svg viewBox="363 176 1557 864" width="1557" height="864" className="absolute inset-0">
    <defs>
      <linearGradient id="side" x1="744" x2="1478" gradientUnits="userSpaceOnUse" y1="0" y2="0">
        <stop offset="0" stopColor="#6b797e" />
        <stop offset=".38" stopColor="#515a5c" />
        <stop offset=".6" stopColor="#5e696c" />
        <stop offset="1" stopColor="#808d92" />
      </linearGradient>
    </defs>
    <path d="M744 380V829A367 211 0 0 0 1478 829V380z" fill="url(#side)" />
    <ellipse cx="1111" cy="380" rx="367" ry="211" fill="#c8e0e6" stroke="#3c4a4e" strokeWidth=".7" />
    <polygon points={poly} fill="none" stroke="#2c3d44" strokeWidth=".9" />
    {/* work csys */}
    <g fill="none" stroke="#c4c8c8" strokeWidth="1">
      <path d="M1111 828V722" stroke="#aab0b0" />
      <path d="M1111 773L1159 746V855L1207 828L1111 773M1111 828L1205 883M1111 828L1205 775" />
    </g>
    <path d="M1111 724l-3 10h6z" fill="#999" />
    <path d="M1206 774l-14 3 3 6z" fill="#ddd" />
    <path d="M1206 884l-14-3 3-7z" fill="#ddd" />
    <ellipse cx="1111" cy="798" rx="2.5" ry="22" fill="#7f96d0" />
    <ellipse cx="1129" cy="815" rx="20" ry="2.5" fill="#b6e0b0" transform="rotate(-30 1129 815)" />
    <ellipse cx="1135" cy="843" rx="20" ry="2.5" fill="#d89a9a" transform="rotate(30 1135 843)" />
    <g fontFamily="'Liberation Sans',sans-serif" fontSize="13">
      <text x="1106" y="720" fill="#ccc">Z</text>
      <text x="1206" y="777" fill="#ccc">Y</text>
      <text x="1206" y="891" fill="#ccc">X</text>
      <text x="1115" y="783" fill="#3050c8" fontWeight="bold">ZC</text>
      <text x="1132" y="802" fill="#3e9a50">YC</text>
      <text x="1134" y="865" fill="#b83838" fontWeight="bold">XC</text>
    </g>
    {/* view triad */}
    <path d="M450 936l20 12v24l-20 10-18-10v-24z" fill="#8a8a8a" />
    <path d="M450 936v22l20 14M450 958l-18 14M450 958l20-10" stroke="#9d9d9d" fill="none" />
    <path d="M430 970l40-20" stroke="#a8c4a4" strokeWidth="1.5" />
    <path d="M430 970V945" stroke="#1838b0" strokeWidth="3" />
    <path d="M430 934l-3 10h6z" fill="#1838b0" />
    <path d="M430 970l30 18" stroke="#b83838" strokeWidth="3" />
    <path d="M466 991l-10-2 4-6z" fill="#b83838" />
    <circle cx="430" cy="970" r="4" fill="#e4e4e4" />
    <g fontFamily="'Liberation Sans',sans-serif" fontSize="12" fontWeight="bold">
      <text x="426" y="933" fill="#1838b0">Z</text>
      <text x="463" y="997" fill="#b83838">X</text>
    </g>
  </svg>
);

const Watermark = () => (
  <div className="absolute left-[1637px] top-[985px] w-[262px] h-[82px] flex pointer-events-none">
    <svg viewBox="0 0 72 82" width="72" height="82" className="shrink-0">
      <path d="M36 0l35 20v42L36 82 1 62V20z" fill="#4f7f96" opacity=".85" />
      <path d="M36 22l18 10v20L36 62 18 52V32z" fill="#0c2a3a" />
      <path d="M36 25l15 8-15 9-15-9z" fill="#2f6d8c" />
      <path d="M21 35l14 8v16l-14-8z" fill="#1d5878" />
      <path d="M51 35l-14 8v16l14-8z" fill="#0e4a6c" />
      <path d="M36 0c14 8 20 20 18 32M71 30C56 22 40 16 20 28M8 62c-6-14-2-30 12-36" fill="none" stroke="#0a2230" strokeWidth="1.2" />
    </svg>
    <div className="ml-[8px] flex flex-col">
      <span className="mt-[13px] text-[40px] leading-[38px] font-bold text-[#707070] tracking-[1px] whitespace-nowrap">3D世界网</span>
      <span className="mt-[5px] text-[14px] leading-[12px] tracking-[4px] text-[#9fb0b6]/80 font-['Liberation_Sans',sans-serif] whitespace-nowrap">WWW.3DSJW.COM</span>
    </div>
  </div>
);

const Taskbar = () => (
  <div className="h-[40px] shrink-0 flex items-center border-t border-[#8a9aa4] bg-[radial-gradient(ellipse_22px_50px_at_885px_20px,#4f5f45_0,transparent_100%),radial-gradient(ellipse_75px_50px_at_1150px_24px,#6a7048_0,transparent_100%),linear-gradient(90deg,#1a0d12_0,#1b1418_20%,#1e3c5c_24%,#234b70_38%,#28607c_50%,#2a6c84_62%,#1f5c78_72%,#2b7d90_86%,#2f7c8a_96%,#5a6a60_100%)] relative">
    <Slot w="w-[56px]">
      <div className="w-[37px] h-[37px] rounded-full bg-[radial-gradient(circle_at_50%_35%,#7fc4e8,#1f6f9c_70%,#123a58)] border border-[#6aa] grid grid-cols-2 gap-[2px] p-[9px] rotate-[-4deg]">
        <div className="bg-[#e8552e] rounded-[2px]" /><div className="bg-[#8cc63f] rounded-[2px]" /><div className="bg-[#3a9ae0] rounded-[2px]" /><div className="bg-[#f4c030] rounded-[2px]" />
      </div>
    </Slot>
    <Slot w="w-[56px]">
      <S s={32}><circle cx="12" cy="5.5" r="5" fill="#7ed46e" /><circle cx="5.5" cy="12" r="5" fill="#2aa5e8" /><circle cx="18.5" cy="12" r="5" fill="#f6c530" /><circle cx="12" cy="18.5" r="5" fill="#f35fb0" /></S>
    </Slot>
    <Slot w="w-[66px]">
      <div className="w-[23px] h-[29px] bg-[#dfe8f0] border border-[#6a92b8] flex flex-col p-[2px] gap-[2px]">
        <div className="h-[7px] bg-[#c8d8e8] border border-[#89a] text-right text-[6px] leading-[6px]">0</div>
        <div className="flex-1 bg-[repeating-linear-gradient(90deg,#6f8aa8_0,#6f8aa8_3px,#dfe8f0_3px,#dfe8f0_4px)]" />
      </div>
    </Slot>
    <Slot w="w-[60px]">
      <div className="w-[30px] h-[28px] bg-[#e8f0e0] border border-[#6a9a5a] grid grid-cols-[16px_1fr] rotate-[3deg]">
        <div className="bg-[#2e7d32] text-white text-[13px] font-bold leading-[26px] text-center">X</div>
        <div className="bg-[repeating-linear-gradient(180deg,#7cae6a_0,#7cae6a_5px,#e8f0e0_5px,#e8f0e0_7px)]" />
      </div>
    </Slot>
    <Slot w="w-[64px]">
      <S s={34}><path d="M1 5h9l2 2h11v15H1z" fill="#e8c562" /><path d="M1 9h22v13H1z" fill="#f6e6a6" /><path d="M6 15h12v7H6z" fill="#5ea6d8" /><path d="M9 18h6v4H9z" fill="#f6e6a6" /></S>
    </Slot>
    <div className="ml-[1px] w-[58px] h-[38px] rounded-[3px] border border-[#778] bg-[linear-gradient(135deg,#8e949c,#2a3346)] flex items-center justify-center">
      <div className="w-[32px] h-[32px] bg-[linear-gradient(180deg,#f08a88,#e22e2e)] flex items-center justify-center">
        <svg viewBox="0 0 24 24" width="22" height="22"><path d="M12 2l10 20h-5l-2-5H9l-2 5H2z" fill="#7c1212" /></svg>
      </div>
    </div>
    <div className="ml-[4px] w-[58px] h-[38px] rounded-[3px] border border-[#bcc] bg-[linear-gradient(135deg,#b8bec4,#68707c)] flex items-center justify-center">
      <S s={34}><circle cx="12" cy="14" r="8" fill="#2a9ad8" /><path d="M3 20c8 2 16-2 20-10-3 9-11 14-19 12z" fill="#e8a81c" /><path d="M5 2h11l-4 11z" fill="#d8263a" /></S>
    </div>
    <div className="ml-auto flex items-center h-full">
      <S s={18}><rect x="3" y="9" width="18" height="11" rx="1" fill="#c8c8c8" stroke="#777" /><path d="M5 12h14M5 15h14" stroke="#777" strokeDasharray="1.5 1" /><path d="M10 9c0-3 4-2 7-5" stroke="#bbb" fill="none" /></S>
      <div className="ml-[5px] w-[14px] flex flex-col items-center gap-[6px] -mt-[6px]">
        <S s={11}><path d="M8 8V3h13v9h-5M3 8h13v12H3z" fill="none" stroke="#fff" strokeWidth="2.4" /></S>
        <Caret color="#eee" />
      </div>
      <S s={18} className="ml-[8px] mt-[5px]"><path d="M12 3L1 22h8z" fill="#c4221e" /><path d="M12 3l11 19h-8z" fill="#30c040" /></S>
      <S s={18} className="ml-[6px] mt-[4px]"><path d="M12 2l9 3v8c0 5-5 8-9 10-4-2-9-5-9-10V5z" fill="#1f66d8" stroke="#fff" strokeWidth="1.6" /></S>
      <div className="ml-[6px] mt-[3px] w-[16px] h-[16px] rounded-[2px] bg-[#2eb4ec] flex items-center justify-center text-white text-[9px]">≋</div>
      <S s={16} className="ml-[7px] mt-[4px]"><path d="M12 3L2 22h8z" fill="#2b8fd0" /><path d="M12 3l10 19h-8z" fill="#8ab030" /></S>
      <S s={20} className="ml-[8px] mt-[3px]"><path d="M2 9h5l8-6v18l-8-6H2z" fill="#e88a5a" stroke="#fff" strokeWidth=".6" /><path d="M18 7c2 3 2 7 0 10" stroke="#888" strokeWidth="1.6" fill="none" /></S>
      <S s={17} className="ml-[8px] mt-[3px]"><path d="M2 18h3v3H2zM7 14h3v7H7zM12 10h3v11h-3zM17 5h3v16h-3z" fill="#fff" /></S>
      <S s={18} className="ml-[6px] mt-[3px]"><path d="M2 9h5l7-6v18l-7-6H2z" fill="#e4e4e4" /><path d="M17 8c2 2 2 6 0 8M20 5c3 4 3 10 0 14" stroke="#ddd" fill="none" /></S>
      <div className="ml-[16px] w-[108px] flex flex-col items-center text-white text-[13px] leading-[18px] pt-[2px]">
        <span className="pl-[6px]">13:09</span>
        <span className="whitespace-nowrap">2017-10-23 星期一</span>
      </div>
      <div className="ml-[13px] w-[14px] h-full border-l border-[#aab] bg-white/15" />
    </div>
  </div>
);

export default function App() {
  return (
    <div className="relative w-[1920px] h-[1080px] overflow-hidden flex flex-col bg-white font-['Noto_Sans','Noto_Sans_CJK_SC',sans-serif]">
      <TitleBar />
      <MenuBar />
      <Ribbon />
      <Toolbar />
      <SubBar />
      <div className="h-[864px] flex shrink-0">
        <SideTabs />
        <Navigator />
        <div className="flex-1 relative bg-black">
          <ModelView />
          <Dialog />
        </div>
      </div>
      <Taskbar />
      <Watermark />
    </div>
  );
}
